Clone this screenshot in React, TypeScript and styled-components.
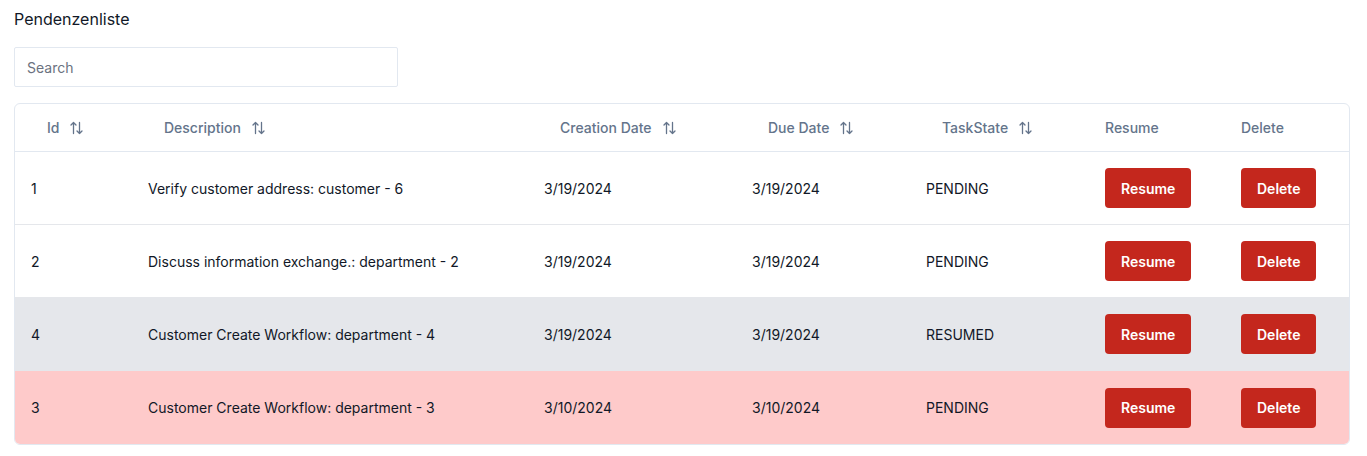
import React from "react";
import styled, { createGlobalStyle } from "styled-components";

const Global = createGlobalStyle`
  html, body { margin: 0; padding: 0; background: #ffffff; }
  body { font-family: Inter, "Noto Sans", sans-serif; color: #111827; }
  * { box-sizing: border-box; }
`;

const Page = styled.div`
  padding: 7px 17px 0 14px;
  display: flex;
  flex-direction: column;
`;

const Title = styled.h1`
  margin: 0;
  font-size: 16px;
  line-height: 24px;
  font-weight: 400;
  color: #111827;
`;

const SearchInput = styled.input`
  margin-top: 16px;
  width: 384px;
  height: 40px;
  border: 1px solid #e2e8f0;
  border-radius: 2px;
  padding: 0 12px;
  font-family: Inter, sans-serif;
  font-size: 14px;
  color: #111827;
  outline: none;
  &::placeholder { color: #6b7280; }
`;

const Table = styled.div`
  margin-top: 16px;
  border: 1px solid #e2e8f0;
  border-radius: 6px;
  overflow: hidden;
`;

const cols = "117px 396px 208px 174px 163px 136px 1fr";

const HeaderRow = styled.div`
  display: grid;
  grid-template-columns: ${cols};
  padding-left: 16px;
  height: 48px;
  align-items: center;
  border-bottom: 1px solid #e2e8f0;
`;

const HeadCell = styled.div`
  padding-left: 16px;
  display: flex;
  align-items: center;
  gap: 11px;
  font-size: 14px;
  font-weight: 500;
  color: #64748b;
`;

const Row = styled.div<{ $tone: "plain" | "gray" | "red"; $last?: boolean }>`
  display: grid;
  grid-template-columns: ${cols};
  padding-left: 16px;
  height: 73px;
  align-items: center;
  background: ${(p) => (p.$tone === "gray" ? "#e5e7eb" : p.$tone === "red" ? "#fecaca" : "#ffffff")};
  border-bottom: ${(p) => (p.$last ? "none" : "1px solid #e5e7eb")};
`;

const Cell = styled.div`
  font-size: 14px;
  color: #111827;
  padding-left: 0;
`;

const ButtonCell = styled.div`
  padding-left: 16px;
`;

const RedButton = styled.button`
  height: 40px;
  padding: 0 16px;
  border: none;
  border-radius: 4px;
  background: #c4271d;
  color: #ffffff;
  font-family: Inter, sans-serif;
  font-size: 14px;
  font-weight: 600;
  cursor: pointer;
`;

const SortIcon = () => (
  <svg width="13" height="14" viewBox="0 0 13 14" fill="none" stroke="#64748b" strokeWidth="1.3" strokeLinecap="round" strokeLinejoin="round">
    <path d="M3.5 12.5V1.5M1 4L3.5 1.5L6 4" />
    <path d="M9.5 1.5V12.5M7 10L9.5 12.5L12 10" />
  </svg>
);

type Task = { id: number; desc: string; created: string; due: string; state: string; tone: "plain" | "gray" | "red" };

const tasks: Task[] = [
  { id: 1, desc: "Verify customer address: customer - 6", created: "3/19/2024", due: "3/19/2024", state: "PENDING", tone: "plain" },
  { id: 2, desc: "Discuss information exchange.: department - 2", created: "3/19/2024", due: "3/19/2024", state: "PENDING", tone: "plain" },
  { id: 4, desc: "Customer Create Workflow: department - 4", created: "3/19/2024", due: "3/19/2024", state: "RESUMED", tone: "gray" },
  { id: 3, desc: "Customer Create Workflow: department - 3", created: "3/10/2024", due: "3/10/2024", state: "PENDING", tone: "red" },
];

export default function App() {
  return (
    <>
      <Global />
      <Page>
        <Title>Pendenzenliste</Title>
        <SearchInput placeholder="Search" />
        <Table>
          <HeaderRow>
            <HeadCell>Id <SortIcon /></HeadCell>
            <HeadCell>Description <SortIcon /></HeadCell>
            <HeadCell>Creation Date <SortIcon /></HeadCell>
            <HeadCell>Due Date <SortIcon /></HeadCell>
            <HeadCell>TaskState <SortIcon /></HeadCell>
            <HeadCell>Resume</HeadCell>
            <HeadCell>Delete</HeadCell>
          </HeaderRow>
          {tasks.map((t, i) => (
            <Row key={t.id} $tone={t.tone} $last={i === tasks.length - 1}>
              <Cell>{t.id}</Cell>
              <Cell>{t.desc}</Cell>
              <Cell>{t.created}</Cell>
              <Cell>{t.due}</Cell>
              <Cell>{t.state}</Cell>
              <ButtonCell><RedButton>Resume</RedButton></ButtonCell>
              <ButtonCell><RedButton>Delete</RedButton></ButtonCell>
            </Row>
          ))}
        </Table>
      </Page>
    </>
  );
}
